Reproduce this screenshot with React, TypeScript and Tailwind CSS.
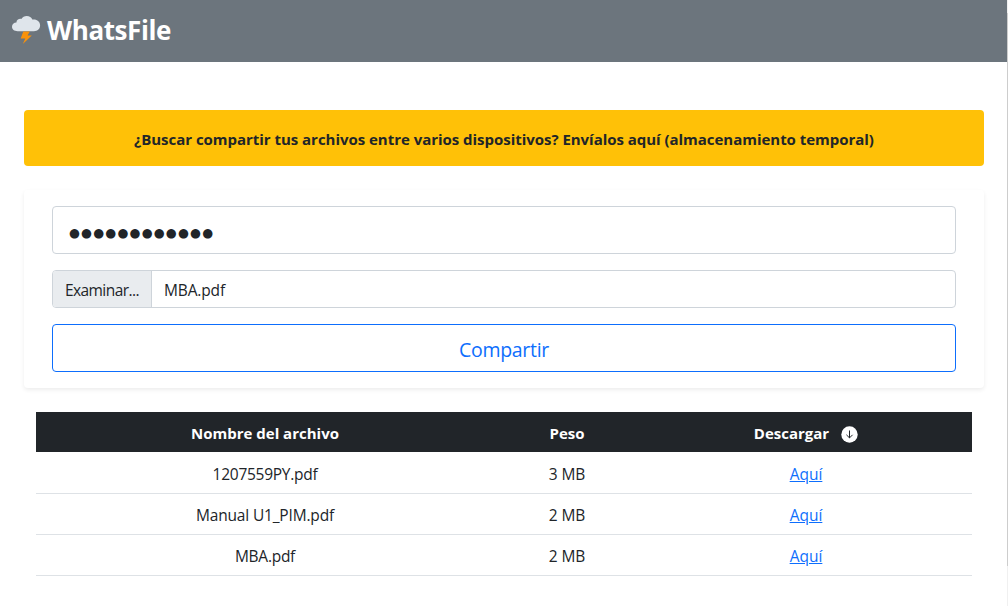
import type { ReactNode } from "react";

type FileRow = { name: string; size: string; nameClass: string };

const files: FileRow[] = [
  { name: "1207559PY.pdf", size: "3 MB", nameClass: "tracking-[-0.27px]" },
  { name: "Manual U1_PIM.pdf", size: "2 MB", nameClass: "tracking-[-0.17px]" },
  { name: "MBA.pdf", size: "2 MB", nameClass: "tracking-[-0.27px]" },
];

function StormCloud() {
  return (
    <svg width="30" height="30" viewBox="0 0 30 30" aria-hidden="true">
      <path
        d="M6.6 16.2C3.2 16.2 1 14.4 1 11.8C1 9.2 2.9 7.6 5.4 7.5C5.6 4.9 7.6 3.6 10.3 3.9C11.6 1.8 13.4.9 15.7.9C18.4.9 20.5 2.3 21.3 4.5C25.8 3.8 29.1 6.4 29.1 10.3C29.1 14 26.7 16.2 22.9 16.2Z"
        fill="#dfe5eb"
      />
      <path d="M12.3 16.5H18.8L16.5 20.4H20.8L11.8 29L14.3 23.4H9.7Z" fill="#f9920b" />
    </svg>
  );
}

function DownCircle() {
  return (
    <svg width="17" height="17" viewBox="0 0 17 17" aria-hidden="true">
      <circle cx="8.5" cy="8.5" r="8.2" fill="#fff" />
      <path d="M8.5 4.5V11.8M5.4 8.8L8.5 11.9L11.6 8.8" fill="none" stroke="#212529" strokeWidth="1" />
    </svg>
  );
}

function Heading({ children, className = "" }: { children: ReactNode; className?: string }) {
  return <th className={`h-10 pt-[2px] font-bold ${className}`}>{children}</th>;
}

export default function App() {
  return (
    <div className="flex h-[606px] w-[1008px] overflow-hidden bg-white font-['Open_Sans','Noto_Sans',sans-serif] text-[15.5px] leading-6 text-[#212529]">
      <div className="w-[1007px]">
        <header className="flex h-[62px] items-center bg-[#6c757d] pb-[2px] pl-[11px]">
          <StormCloud />
          <h1 className="ml-[6px] text-[26px] leading-9 font-bold tracking-[-0.42px] text-white">WhatsFile</h1>
        </header>

        <main className="px-6 pt-12">
          <div className="flex h-14 w-[960px] items-center justify-center rounded bg-[#ffc107] pt-[2px] text-[15px] font-bold">
            <p className="tracking-[-0.03px] whitespace-nowrap">
              ¿Buscar compartir tus archivos entre varios dispositivos? Envíalos aquí (almacenamiento temporal)
            </p>
          </div>

          <form className="mt-6 flex h-[198px] w-[960px] flex-col gap-4 rounded px-7 py-4 shadow-[0_2px_4px_rgba(0,0,0,0.075)]">
            <div className="flex h-12 shrink-0 items-center rounded border border-[#ced4da] pt-[5px] pl-4">
              <span className="font-['DejaVu_Sans',sans-serif] text-[12.5px] tracking-[1.2px]">●●●●●●●●●●●●</span>
            </div>
            <div className="flex h-[38px] shrink-0 overflow-hidden rounded border border-[#ced4da]">
              <button
                type="button"
                className="w-[99px] border-r border-[#ced4da] bg-[#e9ecef] pt-[2px] tracking-[-0.55px]"
              >
                Examinar...
              </button>
              <span className="pt-[7px] pl-3 tracking-[-0.15px]">MBA.pdf</span>
            </div>
            <button
              type="button"
              className="h-12 shrink-0 rounded border border-[#0d6efd] pt-[3px] text-[19.5px] tracking-[-0.3px] text-[#0d6efd]"
            >
              Compartir
            </button>
          </form>

          <table className="mt-6 ml-3 w-[936px] table-fixed border-collapse text-center">
            <colgroup>
              <col className="w-[458px]" />
              <col className="w-[146px]" />
              <col className="w-[332px]" />
            </colgroup>
            <thead className="bg-[#212529] text-[15px] text-white">
              <tr>
                <Heading>Nombre del archivo</Heading>
                <Heading>Peso</Heading>
                <Heading>
                  <span className="flex items-center justify-center">
                    Descargar
                    <span className="ml-3 pt-[3px]">
                      <DownCircle />
                    </span>
                  </span>
                </Heading>
              </tr>
            </thead>
            <tbody>
              {files.map((file) => (
                <tr key={file.name} className="border-b border-[#dee2e6]">
                  <td className={`h-[41px] pt-[3px] ${file.nameClass}`}>{file.name}</td>
                  <td className="pt-[3px] tracking-[-0.1px]">{file.size}</td>
                  <td className="pt-[3px]">
                    <a href="#" className="text-[#0d6efd] underline">
                      Aquí
                    </a>
                  </td>
                </tr>
              ))}
            </tbody>
          </table>
        </main>
      </div>
      <div className="w-px bg-[#f0f0f0] pt-[13px]">
        <div className="h-[553px] bg-[#cdcdcd]" />
      </div>
    </div>
  );
}
